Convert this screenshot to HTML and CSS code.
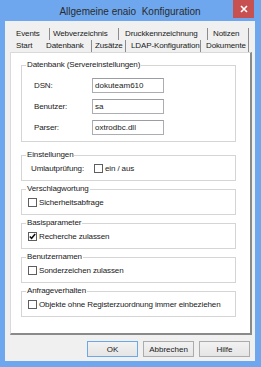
FILE: index.html
```html
<!DOCTYPE html>
<html>
<head>
    <meta charset="utf-8">
    <title>Allgemeine enaio Konfiguration</title>
    <link rel="stylesheet" href="styles.css">
</head>
<body>
    <div class="window">
        <div class="titlebar">
            <span class="title">Allgemeine enaio  Konfiguration</span>
            <button class="close" title="Schließen">
                <svg width="8" height="8" viewBox="0 0 8 8"><path d="M1 1L7 7M7 1L1 7" stroke="#fff" stroke-width="1.6"/></svg>
            </button>
        </div>

        <div class="client">
            <div class="tabs">
                <div class="tab-row back">
                    <span class="tab tab-events">Events</span>
                    <span class="tab tab-web">Webverzeichnis</span>
                    <span class="tab tab-druck">Druckkennzeichnung</span>
                    <span class="tab tab-notizen">Notizen</span>
                </div>
                <div class="tab-row front">
                    <span class="tab flat tab-start">Start</span>
                    <span class="tab active tab-db">Datenbank</span>
                    <span class="tab tab-zusatz">Zusätze</span>
                    <span class="tab tab-ldap">LDAP-Konfiguration</span>
                    <span class="tab tab-doku">Dokumente</span>
                </div>
            </div>

            <div class="panel">
                <fieldset class="group db">
                    <legend>Datenbank (Servereinstellungen)</legend>
                    <div class="field"><label>DSN:</label><input type="text" value="dokuteam610"></div>
                    <div class="field"><label>Benutzer:</label><input type="text" value="sa"></div>
                    <div class="field"><label>Parser:</label><input type="text" value="oxtrodbc.dll"></div>
                </fieldset>

                <fieldset class="group">
                    <legend>Einstellungen</legend>
                    <div class="check">
                        <span class="inline-label">Umlautprüfung:</span>
                        <span class="box"></span>
                        <span>ein / aus</span>
                    </div>
                </fieldset>

                <fieldset class="group">
                    <legend>Verschlagwortung</legend>
                    <div class="check"><span class="box"></span><span>Sicherheitsabfrage</span></div>
                </fieldset>

                <fieldset class="group">
                    <legend>Basisparameter</legend>
                    <div class="check">
                        <span class="box">
                            <svg width="7" height="7" viewBox="0 0 7 7"><path d="M0.8 3.4L2.6 5.3L6.2 1" fill="none" stroke="#111" stroke-width="1.5"/></svg>
                        </span>
                        <span>Recherche zulassen</span>
                    </div>
                </fieldset>

                <fieldset class="group">
                    <legend>Benutzernamen</legend>
                    <div class="check"><span class="box"></span><span>Sonderzeichen zulassen</span></div>
                </fieldset>

                <fieldset class="group">
                    <legend>Anfrageverhalten</legend>
                    <div class="check"><span class="box"></span><span>Objekte ohne Registerzuordnung immer einbeziehen</span></div>
                </fieldset>
            </div>

            <div class="buttons">
                <button class="btn default">OK</button>
                <button class="btn">Abbrechen</button>
                <button class="btn">Hilfe</button>
            </div>
        </div>
    </div>
</body>
</html>
```

FILE: styles.css
```css
* {
    box-sizing: border-box;
}

html, body {
    margin: 0;
}

body {
    font-family: "Liberation Sans", Arial, sans-serif;
    font-size: 8px;
    letter-spacing: -0.12px;
    color: #1a1a1a;
    background: #6ea7ee;
}

.window {
    width: 261px;
    height: 367px;
    background: #6ea7ee;
    padding: 0 6px 6px 5px;
    display: flex;
    flex-direction: column;
}

.titlebar {
    height: 21px;
    display: grid;
    grid-template-columns: 1fr auto 1fr;
    grid-template-rows: 21px;
}

.title {
    grid-column: 2;
    font-size: 10px;
    letter-spacing: 0;
    line-height: 23px;
    color: #2b2b2b;
    white-space: pre;
}

.close {
    grid-column: 3;
    justify-self: end;
    width: 21px;
    height: 18px;
    margin-right: 1px;
    padding: 0;
    border: none;
    background: #c75050;
    display: flex;
    align-items: center;
    justify-content: center;
}

.client {
    flex: 1;
    background: #f0f0f0;
    padding: 7px 3px 4px 5px;
    display: flex;
    flex-direction: column;
}

/* tabs */
.tabs {
    height: 24px;
}

.tab-row {
    display: flex;
    height: 12px;
    line-height: 12px;
}

.tab-row.back { margin: 0 3px 0 3px; }
.tab-row.front { margin: 0 3px 0 1px; }

.tab {
    flex: none;
    padding: 0 0 0 4px;
    border-right: 1px solid #8c8c8c;
    white-space: nowrap;
    overflow: hidden;
}

.tab.flat { border-right-color: transparent; }
.tab.active { padding-left: 5px; }

.tab-events { width: 37px; padding-left: 3px; }
.tab-web { width: 69px; padding-left: 3px; }
.tab-druck { width: 89px; padding-left: 6px; }
.tab-notizen { width: 41px; padding-left: 5px; }
.tab-start { width: 30px; padding-left: 5px; }
.tab-db { width: 51px; }
.tab-zusatz { width: 34px; padding-left: 3px; }
.tab-ldap { width: 75px; padding-left: 5px; }
.tab-doku { width: 48px; padding-left: 5px; }

/* panel */
.panel {
    flex: 1;
    background: #fff;
    border: 1px solid #d9d9d9;
    border-right: 2px solid #8a8a8a;
    border-bottom: 2px solid #8a8a8a;
    padding: 7px 14px 0 10px;
}

.group {
    margin: 0;
    padding: 3px 6px 6px;
    border: 1px solid #d5d5d5;
    min-width: 0;
}

.group legend {
    padding: 0 1px;
    margin-left: -2px;
    line-height: 10px;
}

.group + .group { margin-top: 3px; }
.group.db { padding: 8px 6px 6px; }
.group.db + .group { margin-top: 8px; }

.field {
    display: flex;
    align-items: center;
    height: 15px;
}

.field + .field { margin-top: 6px; }

.field label {
    width: 58px;
    margin-left: 6px;
}

.field input {
    width: 72px;
    height: 15px;
    border: 1px solid #abadb3;
    border-top-color: #9a9da4;
    font: inherit;
    color: #1a1a1a;
    padding: 0 2px;
    outline: none;
}

.check {
    display: flex;
    align-items: center;
    gap: 2px;
    height: 11px;
}

.inline-label {
    width: 61px;
    margin-left: 3px;
}

.box {
    width: 9px;
    height: 9px;
    border: 1px solid #5e5e5e;
    background: #fff;
    display: flex;
    align-items: center;
    justify-content: center;
}

/* buttons */
.buttons {
    display: flex;
    justify-content: flex-end;
    gap: 5px;
    margin-top: 6px;
    padding-right: 2px;
}

.btn {
    width: 51px;
    height: 16px;
    padding: 0;
    font: inherit;
    color: #1a1a1a;
    border: 1px solid #acacac;
    background: linear-gradient(#f2f2f2, #e5e5e5);
}

.btn.default { border-color: #6aa9e8; }
```
